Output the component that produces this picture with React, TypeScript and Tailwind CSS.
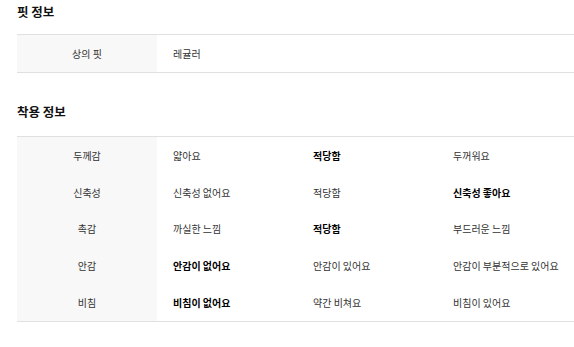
import React from 'react'

const font = { fontFamily: '"Noto Sans CJK KR", "Noto Sans", sans-serif' }

type Cell = { text: string; bold?: boolean }

const wearRows: { label: string; cells: Cell[] }[] = [
  { label: '두께감', cells: [{ text: '얇아요' }, { text: '적당함', bold: true }, { text: '두꺼워요' }] },
  { label: '신축성', cells: [{ text: '신축성 없어요' }, { text: '적당함' }, { text: '신축성 좋아요', bold: true }] },
  { label: '촉감', cells: [{ text: '까실한 느낌' }, { text: '적당함', bold: true }, { text: '부드러운 느낌' }] },
  { label: '안감', cells: [{ text: '안감이 없어요', bold: true }, { text: '안감이 있어요' }, { text: '안감이 부분적으로 있어요' }] },
  { label: '비침', cells: [{ text: '비침이 없어요', bold: true }, { text: '약간 비쳐요' }, { text: '비침이 있어요' }] },
]

const Heading: React.FC<{ children: React.ReactNode }> = ({ children }) => (
  <h2 className="h-[24px] leading-[24px] text-[12.5px] font-bold text-[#111]">{children}</h2>
)

export default function App() {
  return (
    <div className="w-[574px] h-[347px] overflow-hidden bg-white pl-[17px]" style={font}>
      <Heading>핏 정보</Heading>
      <div className="mt-[10px] border-y border-[#e0e0e0] grid grid-cols-[140px_1fr] text-[10px] text-[#333]">
        <div className="h-[37px] bg-[#f8f8f8] flex items-center justify-center">상의 핏</div>
        <div className="h-[37px] flex items-center pl-[16px]">레귤러</div>
      </div>

      <div className="mt-[27px]">
        <Heading>착용 정보</Heading>
      </div>
      <div className="mt-[12px] border-y border-[#e0e0e0] grid grid-cols-[140px_140px_140px_1fr] text-[10px] text-[#333]">
        {wearRows.map((row) => (
          <React.Fragment key={row.label}>
            <div className="h-[36.8px] bg-[#f8f8f8] flex items-center justify-center">{row.label}</div>
            {row.cells.map((c, i) => (
              <div
                key={i}
                className={`h-[36.8px] flex items-center pl-[16px] ${c.bold ? 'font-bold text-black' : ''}`}
              >
                {c.text}
              </div>
            ))}
          </React.Fragment>
        ))}
      </div>
    </div>
  )
}
